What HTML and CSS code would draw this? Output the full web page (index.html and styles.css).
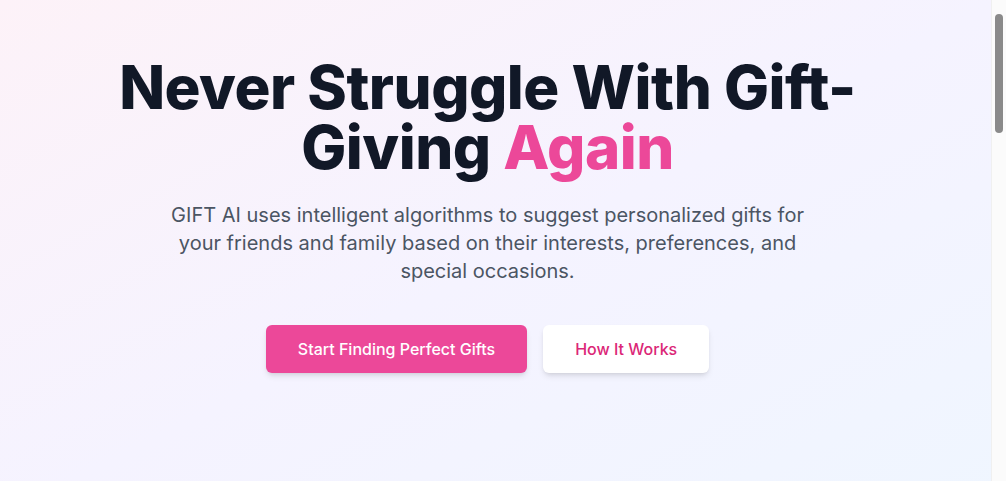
FILE: index.html
```html
<!DOCTYPE html>
<html lang="en">
<head>
<meta charset="utf-8">
<title>GIFT AI</title>
<link rel="stylesheet" href="styles.css">
</head>
<body>
<main>
  <section class="hero">
    <div class="hero-inner">
      <h1 class="hero-title">Never Struggle With Gift-<br>Giving <span class="accent">Again</span></h1>
      <p class="hero-text">GIFT AI uses intelligent algorithms to suggest personalized gifts for your friends and family based on their interests, preferences, and special occasions.</p>
      <div class="hero-actions">
        <a class="btn btn-primary" href="#">Start Finding Perfect Gifts</a>
        <a class="btn btn-secondary" href="#">How It Works</a>
      </div>
    </div>
  </section>
  <section class="below"></section>
</main>
<div class="scrollbar" aria-hidden="true"><div class="scrollbar-thumb"></div></div>
</body>
</html>
```
FILE: styles.css
```css
* { box-sizing: border-box; }
html, body { margin: 0; padding: 0; }
body {
  font-family: Inter, "Noto Sans", sans-serif;
  color: #111827;
  background: #ffffff;
}
.hero {
  min-height: 520px;
  background: linear-gradient(to bottom right, #fdf2f8, #f5f3ff 50%, #eff6ff);
  padding: 57px 31px 80px 0;
}
.hero-inner {
  max-width: 896px;
  margin: 0 auto;
  display: flex;
  flex-direction: column;
  align-items: center;
  text-align: center;
}
.hero-title {
  margin: 0 0 24px;
  font-family: Inter, sans-serif;
  font-weight: 800;
  font-size: 60px;
  line-height: 60px;
  letter-spacing: -0.5px;
  color: #111827;
}
.accent { color: #ec4899; }
.hero-text {
  margin: 0 0 40px;
  max-width: 672px;
  font-size: 20px;
  line-height: 28px;
  color: #4b5563;
}
.hero-actions {
  display: flex;
  gap: 16px;
  justify-content: center;
}
.btn {
  display: inline-block;
  padding: 12px 32px;
  font-size: 16px;
  line-height: 24px;
  font-weight: 500;
  text-decoration: none;
  border-radius: 6px;
  box-shadow: 0 4px 6px -1px rgba(0,0,0,0.1), 0 2px 4px -2px rgba(0,0,0,0.1);
}
.btn-primary { background: #ec4899; color: #ffffff; }
.btn-secondary { background: #ffffff; color: #db2777; }
.below { height: 1300px; background: #ffffff; }
.scrollbar {
  position: fixed;
  top: 0;
  right: 0;
  width: 15px;
  height: 100vh;
  background: #fbfbfb;
  border-left: 1px solid #f0f0f0;
}
.scrollbar-thumb {
  position: absolute;
  top: 14px;
  left: 3px;
  width: 8px;
  height: 119px;
  border-radius: 4px;
  background: #8a8a8a;
}
```
